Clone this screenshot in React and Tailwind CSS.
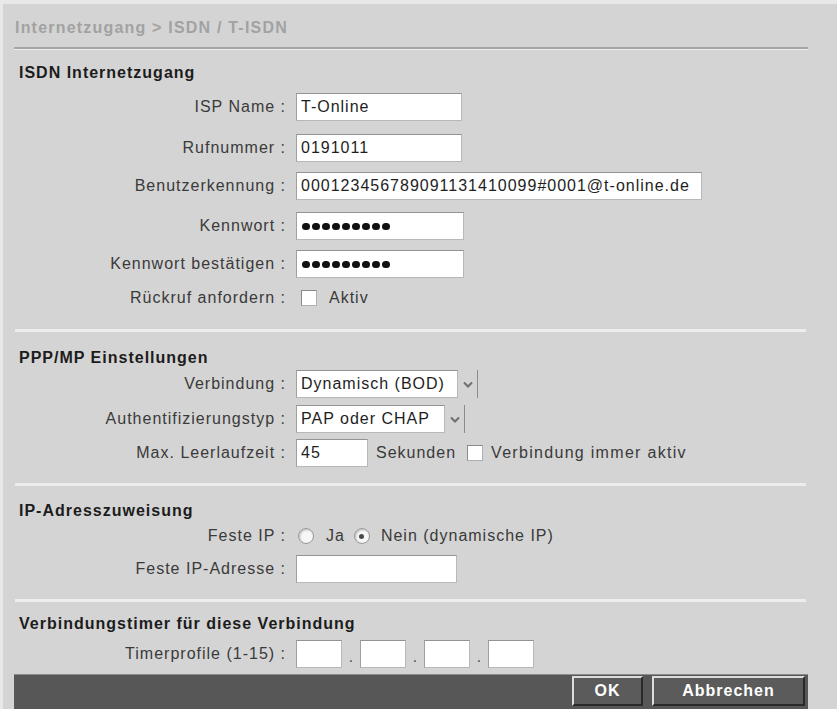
import React from "react";

function Label({ children }) {
  return (
    <div className="w-[272px] shrink-0 text-right text-[#3a3a3a] whitespace-nowrap">
      {children}
    </div>
  );
}

function TextBox({ w, value, flush }) {
  return (
    <input
      readOnly
      value={value}
      className={
        "h-[28px] shrink-0 bg-white border border-[#b8b8b8] border-t-[#939393] border-l-[#a0a0a0] px-[4px] text-[#1e1e1e] outline-none font-['Liberation_Sans',Arial,sans-serif] text-[16px] tracking-[1px] " +
        (flush ? "ml-0" : "ml-[10px]")
      }
      style={{ width: w }}
    />
  );
}

function PasswordBox() {
  return (
    <div className="h-[28px] w-[168px] ml-[10px] shrink-0 bg-white border border-[#b8b8b8] border-t-[#939393] border-l-[#a0a0a0] pl-[5px] flex items-center gap-[2px]">
      {[0, 1, 2, 3, 4, 5, 6, 7, 8].map((i) => (
        <span key={i} className="w-[8px] h-[7px] rounded-full bg-[#111]" />
      ))}
    </div>
  );
}

function Chevron() {
  return (
    <svg width="10" height="7" viewBox="0 0 10 7">
      <polyline points="1,1.5 5,5.5 9,1.5" fill="none" stroke="#6f6f6f" strokeWidth="2" />
    </svg>
  );
}

function Select({ total, white, value }) {
  return (
    <div
      className="ml-[10px] h-[28px] flex shrink-0 border-r border-[#8c8c8c]"
      style={{ width: total }}
    >
      <div
        className="h-full bg-white border border-[#b8b8b8] border-t-[#939393] border-l-[#a0a0a0] px-[4px] flex items-center text-[#1e1e1e] whitespace-nowrap overflow-hidden"
        style={{ width: white }}
      >
        {value}
      </div>
      <div className="flex-1 flex items-center justify-center pt-[1px]">
        <Chevron />
      </div>
    </div>
  );
}

function Checkbox({ className = "" }) {
  return (
    <span
      className={
        "inline-block w-[16px] h-[16px] shrink-0 bg-white border border-[#8a8a8a] border-b-[#b0b0b0] border-r-[#b0b0b0] " +
        className
      }
    />
  );
}

function Radio({ checked, className = "" }) {
  return (
    <span
      className={
        "w-[16px] h-[16px] shrink-0 rounded-full bg-[#f7f7f7] border border-[#9a9a9a] shadow-[inset_1px_1px_2px_rgba(0,0,0,0.25)] flex items-center justify-center " +
        className
      }
    >
      {checked && <span className="w-[5px] h-[5px] rounded-full bg-[#4a4a4a]" />}
    </span>
  );
}

function Heading({ children, className = "" }) {
  return (
    <div className={"pl-[5px] font-bold text-[#1c1c1c] whitespace-nowrap " + className}>
      {children}
    </div>
  );
}

function Separator({ className = "" }) {
  return <div className={"h-[3px] bg-[#ededed] mr-[2px] ml-[1px] " + className} />;
}

function Dot() {
  return (
    <span className="w-[18px] shrink-0 text-center self-end leading-[22px] tracking-normal text-[#555]">
      .
    </span>
  );
}

export default function App() {
  return (
    <div className="w-[837px] h-[709px] overflow-hidden bg-[#e8e8e8] pt-[4px] pl-[3px] font-['Liberation_Sans',Arial,sans-serif] text-[16px] leading-[20px] tracking-[1px]">
      <div className="h-full bg-[#d4d4d4] pl-[11px] pr-[29px] flex flex-col">
        {/* Breadcrumb */}
        <div className="pt-[14px] pl-[1px] font-bold text-[#a2a2a2] whitespace-nowrap tracking-[1.2px]">
          Internetzugang &gt; ISDN / T-ISDN
        </div>
        <div className="mt-[9px] h-[3px] border-t-2 border-[#a6a6a6] border-b border-b-[#ececec]" />

        {/* Section 1 */}
        <Heading className="mt-[13px]">ISDN Internetzugang</Heading>
        <div className="mt-[10px] flex h-[28px] items-center">
          <Label>ISP Name :</Label>
          <TextBox w={166} value="T-Online" />
        </div>
        <div className="mt-[13px] flex h-[28px] items-center">
          <Label>Rufnummer :</Label>
          <TextBox w={166} value="0191011" />
        </div>
        <div className="mt-[10px] flex h-[28px] items-center">
          <Label>Benutzerkennung :</Label>
          <TextBox w={406} value="000123456789091131410099#0001@t-online.de" />
        </div>
        <div className="mt-[12px] flex h-[28px] items-center">
          <Label>Kennwort :</Label>
          <PasswordBox />
        </div>
        <div className="mt-[10px] flex h-[28px] items-center">
          <Label>Kennwort bestätigen :</Label>
          <PasswordBox />
        </div>
        <div className="mt-[6px] flex h-[28px] items-center">
          <Label>Rückruf anfordern :</Label>
          <Checkbox className="ml-[15px]" />
          <span className="ml-[12px] text-[#3a3a3a]">Aktiv</span>
        </div>
        <Separator className="mt-[17px]" />

        {/* Section 2 */}
        <Heading className="mt-[16px]">PPP/MP Einstellungen</Heading>
        <div className="mt-[2px] flex h-[28px] items-center">
          <Label>Verbindung :</Label>
          <Select total={182} white={162} value="Dynamisch (BOD)" />
        </div>
        <div className="mt-[7px] flex h-[28px] items-center">
          <Label>Authentifizierungstyp :</Label>
          <Select total={169} white={149} value="PAP oder CHAP" />
        </div>
        <div className="mt-[6px] flex h-[28px] items-center">
          <Label>Max. Leerlaufzeit :</Label>
          <TextBox w={72} value="45" />
          <span className="ml-[8px] text-[#3a3a3a] whitespace-nowrap">Sekunden</span>
          <Checkbox className="ml-[11px]" />
          <span className="ml-[8px] text-[#3a3a3a] whitespace-nowrap tracking-[1.3px]">Verbindung immer aktiv</span>
        </div>
        <Separator className="mt-[16px]" />

        {/* Section 3 */}
        <Heading className="mt-[15px]">IP-Adresszuweisung</Heading>
        <div className="mt-[5px] flex h-[20px] items-center">
          <Label>Feste IP :</Label>
          <Radio className="ml-[12px]" />
          <span className="ml-[12px] text-[#3a3a3a]">Ja</span>
          <Radio checked className="ml-[9px]" />
          <span className="ml-[11px] text-[#3a3a3a] whitespace-nowrap">Nein (dynamische IP)</span>
        </div>
        <div className="mt-[9px] flex h-[28px] items-center">
          <Label>Feste IP-Adresse :</Label>
          <TextBox w={161} value="" />
        </div>
        <Separator className="mt-[16px]" />

        {/* Section 4 */}
        <Heading className="mt-[12px]">Verbindungstimer für diese Verbindung</Heading>
        <div className="mt-[6px] flex h-[28px] items-center">
          <Label>Timerprofile (1-15) :</Label>
          <TextBox w={46} value="" />
          <Dot />
          <TextBox w={46} value="" flush />
          <Dot />
          <TextBox w={46} value="" flush />
          <Dot />
          <TextBox w={46} value="" flush />
        </div>

        {/* Bottom bar */}
        <div className="mt-[6px] flex-1 bg-[#575757] border-t border-[#8a8a8a] flex justify-end items-start pt-[1px] pr-[3px] gap-[9px]">
          <button className="h-[30px] w-[71px] bg-[#5b5b5b] border-2 border-t-[#dcdcdc] border-l-[#dcdcdc] border-r-[#2a2a2a] border-b-[#2a2a2a] text-white font-bold tracking-[1px] font-['Liberation_Sans',Arial,sans-serif] text-[16px]">
            OK
          </button>
          <button className="h-[30px] w-[153px] bg-[#5b5b5b] border-2 border-t-[#dcdcdc] border-l-[#dcdcdc] border-r-[#2a2a2a] border-b-[#2a2a2a] text-white font-bold tracking-[1px] font-['Liberation_Sans',Arial,sans-serif] text-[16px]">
            Abbrechen
          </button>
        </div>
      </div>
    </div>
  );
}
